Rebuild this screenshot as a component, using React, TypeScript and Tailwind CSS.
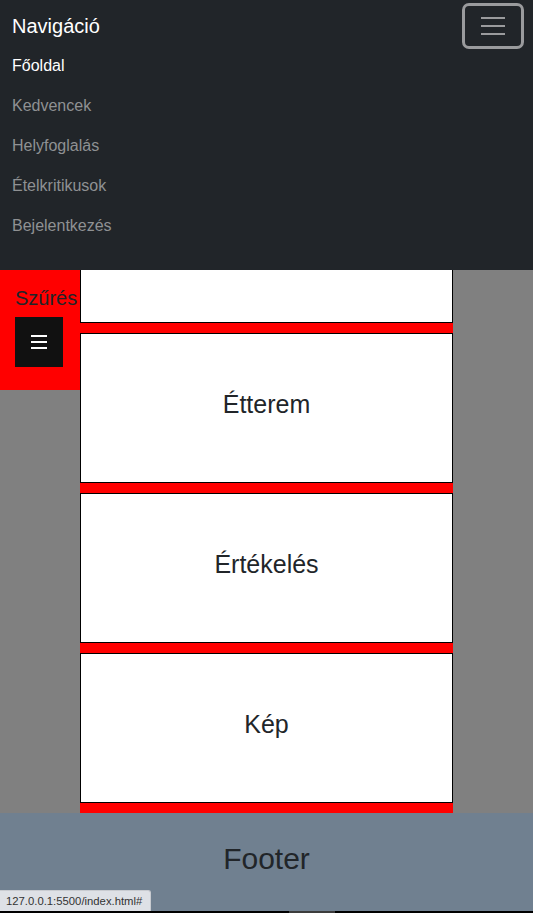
import React from "react";

const links = ["Főoldal", "Kedvencek", "Helyfoglalás", "Ételkritikusok", "Bejelentkezés"];
const cards = ["Étterem", "Értékelés", "Kép"];

export default function App() {
  return (
    <div className="relative flex h-[913px] w-[533px] flex-col overflow-hidden font-['Liberation_Sans',Arial,sans-serif] text-[#212529]">
      {/* Navbar */}
      <nav className="flex h-[270px] shrink-0 flex-col bg-[#212529] px-3">
        <div className="flex h-[46px] items-start justify-between">
          <span className="mt-[11px] text-[20px] leading-[30px] text-white">Navigáció</span>
          <button className="mr-[-3px] mt-[3px] flex h-[46px] w-[62px] flex-col items-center justify-center gap-[6px] rounded-[7px] border-[3px] border-[#9a9b9d]">
            <span className="h-[2px] w-[24px] bg-[#9a9b9d]" />
            <span className="h-[2px] w-[24px] bg-[#9a9b9d]" />
            <span className="h-[2px] w-[24px] bg-[#9a9b9d]" />
          </button>
        </div>
        <ul className="flex flex-col">
          {links.map((l, i) => (
            <li key={l} className={`py-2 text-[16px] leading-[24px] ${i === 0 ? "text-white" : "text-[#8f9193]"}`}>
              {l}
            </li>
          ))}
        </ul>
      </nav>

      {/* Content */}
      <main className="flex h-[543px] shrink-0 bg-[#808080]">
        <aside className="flex h-[120px] w-[80px] shrink-0 flex-col bg-[#ff0000] pl-[15px]">
          <span className="mt-[16px] text-[20px] leading-[24px] text-[#212529]">Szűrés</span>
          <button className="mt-[7px] flex h-[50px] w-[48px] flex-col items-center justify-center gap-[4px] bg-[#111111]">
            <span className="h-[2px] w-[16px] bg-white" />
            <span className="h-[2px] w-[16px] bg-white" />
            <span className="h-[2px] w-[16px] bg-white" />
          </button>
        </aside>
        <section className="flex h-[543px] w-[373px] shrink-0 flex-col gap-[10px] bg-[#ff0000]">
          <div className="h-[53px] border border-t-0 border-black bg-white" />
          {cards.map((c) => (
            <div key={c} className="flex h-[150px] items-center justify-center border border-black bg-white pb-[7px] text-[25px] text-[#212529]">
              {c}
            </div>
          ))}
        </section>
      </main>

      {/* Footer */}
      <footer className="flex h-[98px] shrink-0 items-center justify-center bg-[#708090] pb-[7px] text-[30px] text-[#212529]">
        Footer
      </footer>
      <div className="flex h-[2px] shrink-0 bg-black">
        <span className="ml-[289px] h-[2px] w-[46px] bg-[#3c3c3c]" />
      </div>

      {/* Browser status bubble */}
      <div className="absolute bottom-[2px] left-0 flex h-[21px] w-[151px] items-center rounded-tr-[3px] border-r border-t border-[#c8cbd0] bg-[#dee1e6] pl-[6px] text-[11.3px] text-[#333]">
        127.0.0.1:5500/index.html#
      </div>
    </div>
  );
}
